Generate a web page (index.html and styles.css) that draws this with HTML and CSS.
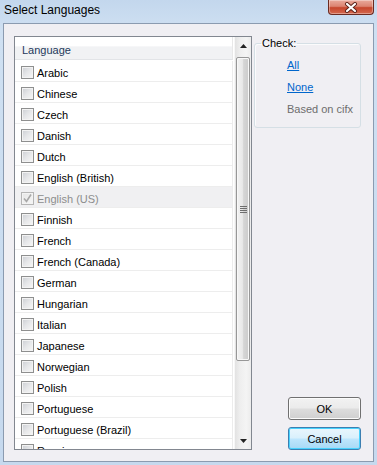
FILE: index.html
```html
<!DOCTYPE html>
<html>
<head>
<meta charset="utf-8">
<link rel="stylesheet" href="styles.css">
</head>
<body>
<div class="window">
  <div class="titlebar">
    <span class="title">Select Languages</span>
    <div class="close">
      <svg width="14" height="11" viewBox="0 0 14 11">
        <path d="M3 2 L11 9 M11 2 L3 9" stroke="#5a2219" stroke-width="4" stroke-linecap="round"/>
        <path d="M3 2 L11 9 M11 2 L3 9" stroke="#ffffff" stroke-width="2.2" stroke-linecap="round"/>
      </svg>
    </div>
  </div>
  <div class="client">
    <div class="list">
      <div class="list-main">
        <div class="header">Language</div>
        <div class="rows">
          <div class="row"><span class="cb"></span><span>Arabic</span></div>
          <div class="row"><span class="cb"></span><span>Chinese</span></div>
          <div class="row"><span class="cb"></span><span>Czech</span></div>
          <div class="row"><span class="cb"></span><span>Danish</span></div>
          <div class="row"><span class="cb"></span><span>Dutch</span></div>
          <div class="row"><span class="cb"></span><span>English (British)</span></div>
          <div class="row disabled"><span class="cb checked"><svg width="11" height="11" viewBox="0 0 11 11"><path d="M2 5.5 L4.5 8.5 L9 1.5" fill="none" stroke="#a8a8a8" stroke-width="1.6"/></svg></span><span>English (US)</span></div>
          <div class="row"><span class="cb"></span><span>Finnish</span></div>
          <div class="row"><span class="cb"></span><span>French</span></div>
          <div class="row"><span class="cb"></span><span>French (Canada)</span></div>
          <div class="row"><span class="cb"></span><span>German</span></div>
          <div class="row"><span class="cb"></span><span>Hungarian</span></div>
          <div class="row"><span class="cb"></span><span>Italian</span></div>
          <div class="row"><span class="cb"></span><span>Japanese</span></div>
          <div class="row"><span class="cb"></span><span>Norwegian</span></div>
          <div class="row"><span class="cb"></span><span>Polish</span></div>
          <div class="row"><span class="cb"></span><span>Portuguese</span></div>
          <div class="row"><span class="cb"></span><span>Portuguese (Brazil)</span></div>
          <div class="row"><span class="cb"></span><span>Russian</span></div>
        </div>
      </div>
      <div class="scrollbar">
        <div class="arrow"><svg width="7" height="4" viewBox="0 0 7 4"><path d="M0 4 L3.5 0 L7 4 Z" fill="#222"/></svg></div>
        <div class="track">
          <div class="thumb"><span class="grip"></span></div>
        </div>
        <div class="arrow"><svg width="7" height="4" viewBox="0 0 7 4"><path d="M0 0 L7 0 L3.5 4 Z" fill="#222"/></svg></div>
      </div>
    </div>
    <div class="side">
      <fieldset class="group">
        <legend>Check:</legend>
        <div class="links">
          <a class="link" href="#">All</a>
          <a class="link" href="#">None</a>
          <span class="muted">Based on cifx</span>
        </div>
      </fieldset>
      <div class="buttons">
        <button class="btn">OK</button>
        <button class="btn default">Cancel</button>
      </div>
    </div>
  </div>
</div>
</body>
</html>
```
FILE: styles.css
```css
* { box-sizing: border-box; }
html, body { margin: 0; padding: 0; }
body {
  width: 377px;
  height: 465px;
  overflow: hidden;
  font-family: "Liberation Sans", Arial, sans-serif;
  font-size: 11px;
  color: #000;
}
.window {
  width: 377px;
  height: 465px;
  display: flex;
  flex-direction: column;
  background: linear-gradient(to bottom, #c3d7ed 0, #cfe0f2 30px, #c6d9ee 100%);
}
.titlebar {
  height: 23px;
  display: flex;
  justify-content: space-between;
  align-items: flex-start;
  padding-left: 4px;
  padding-right: 3px;
}
.title {
  font-size: 12px;
  line-height: 14px;
  padding-top: 3px;
  color: #000;
}
.close {
  width: 46px;
  height: 15px;
  border: 1px solid #6b2a20;
  border-top: none;
  border-radius: 0 0 4px 4px;
  background: linear-gradient(to bottom, #e9aa9c 0%, #dc8472 45%, #c6462d 55%, #d4694f 100%);
  box-shadow: inset 0 0 0 1px rgba(255,255,255,0.35);
  display: flex;
  align-items: center;
  justify-content: center;
}
.client {
  flex: 1;
  margin: 0 3px 3px 3px;
  border: 1px solid #8b9bb0;
  background: #f0eff3;
  display: flex;
  padding: 12px 12px 11px 10px;
  gap: 2px;
}
.list {
  width: 238px;
  height: 414px;
  border: 1px solid #828790;
  background: #fff;
  display: flex;
}
.list-main {
  width: 219px;
  overflow: hidden;
  display: flex;
  flex-direction: column;
}
.header {
  height: 23px;
  flex: none;
  width: 218px;
  padding-left: 7px;
  padding-top: 3px;
  display: flex;
  align-items: center;
  color: #1e395b;
  border-bottom: 1px solid #e2e4e7;
  border-right: 1px solid #e8e8e8;
  background: linear-gradient(to bottom, #ffffff 0%, #ffffff 40%, #f1f2f4 45%, #f1f2f4 100%);
}
.rows {
  padding-top: 1px;
}
.row {
  height: 21px;
  width: 218px;
  border-bottom: 1px solid #ededed;
  border-right: 1px solid #ececec;
  padding-left: 6px;
  padding-top: 3px;
  display: flex;
  align-items: center;
  gap: 3px;
  white-space: nowrap;
}
.row.disabled {
  background: #f0f0f2;
  color: #8d8d8d;
}
.cb {
  width: 13px;
  height: 13px;
  flex: none;
  border: 1px solid #8e8f8f;
  background: linear-gradient(135deg, #cbced3 0%, #e6e7e9 50%, #f7f7f7 100%);
  box-shadow: inset 0 0 0 1px #f3f3f3;
  display: flex;
  align-items: center;
  justify-content: center;
}
.cb.checked {
  border-color: #b5b5b5;
  background: linear-gradient(135deg, #e6e6e6 0%, #f6f6f6 100%);
}
.scrollbar {
  width: 17px;
  display: flex;
  flex-direction: column;
  background: linear-gradient(to right, #e2e2e2 0%, #eeeeee 30%, #f4f4f4 70%, #ececec 100%);
  border-left: 1px solid #f7f7f7;
}
.arrow {
  height: 17px;
  flex: none;
  display: flex;
  align-items: center;
  justify-content: center;
}
.track {
  flex: 1;
  padding-top: 3px;
}
.thumb {
  height: 304px;
  margin: 0 1px 0 1px;
  border: 1px solid #979797;
  border-radius: 2px;
  background: linear-gradient(to right, #f2f2f2 0%, #e9e9e9 45%, #d6d6d6 55%, #cbcbcb 100%);
  box-shadow: inset 0 0 0 1px #f8f8f8;
  display: flex;
  align-items: center;
  justify-content: center;
}
.grip {
  width: 7px;
  height: 7px;
  background: repeating-linear-gradient(to bottom, #6e6e6e 0, #6e6e6e 1px, transparent 1px, transparent 2px);
}
.side {
  width: 107px;
  display: flex;
  flex-direction: column;
}
.group {
  margin: 0;
  padding: 0 0 11px 6px;
  border: 1px solid #d5dfe5;
  border-radius: 3px;
  min-width: 0;
  box-shadow: inset 1px 1px 0 #fbfbfc;
}
.group legend {
  padding: 0 1px;
  line-height: 14px;
  height: 14px;
  color: #000;
}
.links {
  padding-left: 26px;
  padding-top: 9px;
  display: flex;
  flex-direction: column;
  gap: 9px;
  line-height: 13px;
}
.link {
  color: #0066cc;
  text-decoration: underline;
}
.muted {
  color: #6d6d6d;
  white-space: nowrap;
}
.buttons {
  margin-top: auto;
  padding-left: 34px;
  display: flex;
  flex-direction: column;
  gap: 7px;
}
.btn {
  width: 73px;
  height: 23px;
  margin: 0;
  padding: 0;
  font-family: "Liberation Sans", Arial, sans-serif;
  font-size: 11px;
  color: #000;
  border: 1px solid #707070;
  border-radius: 3px;
  background: linear-gradient(to bottom, #f2f2f2 0%, #ebebeb 48%, #dddddd 52%, #cfcfcf 100%);
  box-shadow: inset 0 0 0 1px #fbfbfb;
}
.btn.default {
  border-color: #3c7fb1;
  background: linear-gradient(to bottom, #eaf6fd 0%, #d9f0fc 48%, #bee6fd 52%, #a7d9f5 100%);
  box-shadow: inset 0 0 0 1px #48d2fe;
}
```
